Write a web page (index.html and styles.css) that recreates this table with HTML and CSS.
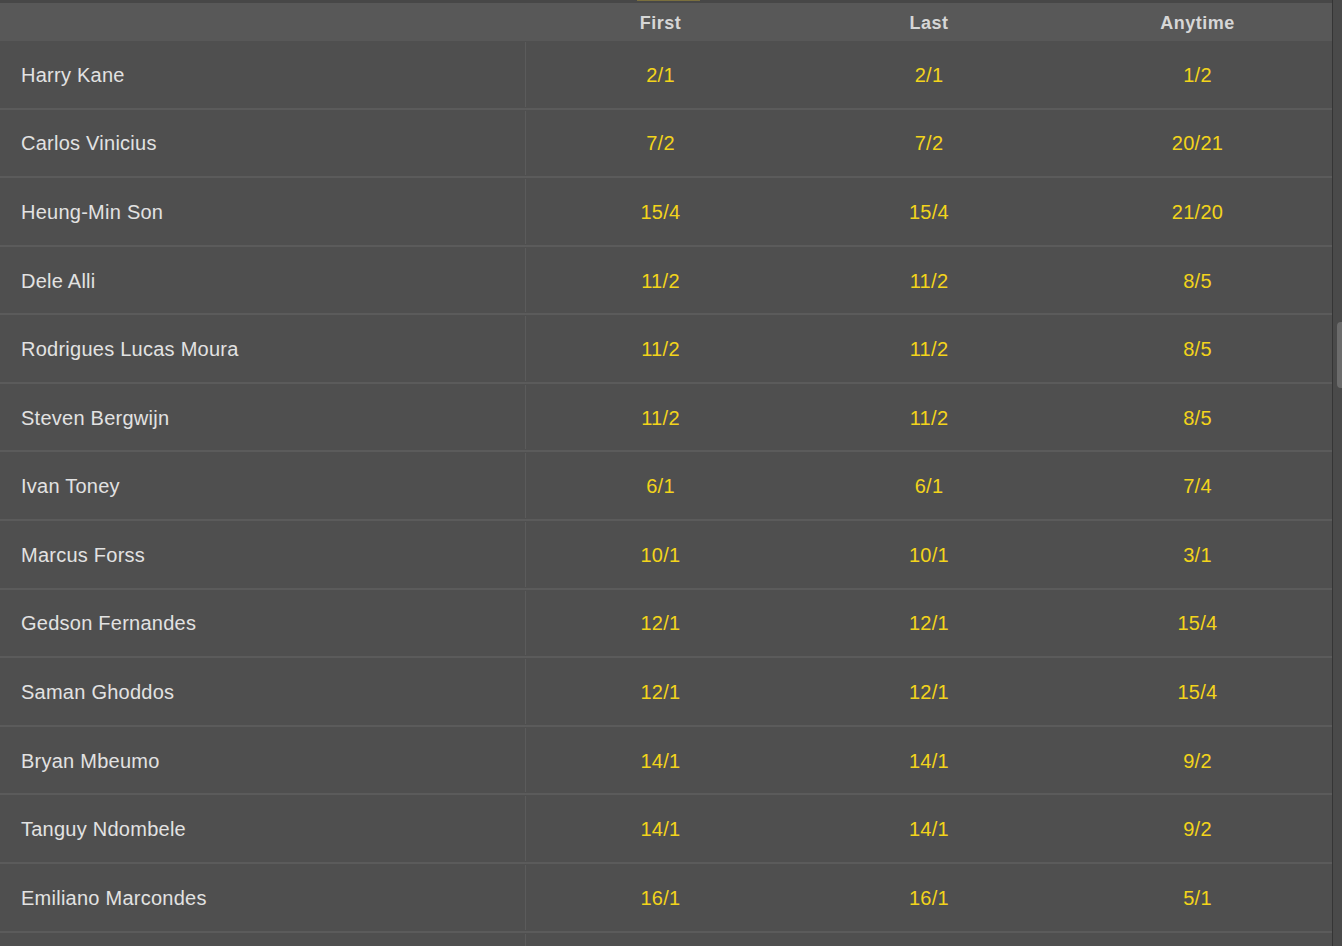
FILE: index.html
```html
<!DOCTYPE html>
<html>
<head>
<meta charset="utf-8">
<link rel="stylesheet" href="styles.css">
</head>
<body>
<div class="page">
  <div class="table">
    <div class="topstrip"><span class="accent"></span></div>
    <div class="head">
      <div class="hcell"></div>
      <div class="hcell">First</div>
      <div class="hcell">Last</div>
      <div class="hcell">Anytime</div>
    </div>
    <div class="row"><div class="name">Harry Kane</div><div class="odd">2/1</div><div class="odd">2/1</div><div class="odd">1/2</div></div>
    <div class="row"><div class="name">Carlos Vinicius</div><div class="odd">7/2</div><div class="odd">7/2</div><div class="odd">20/21</div></div>
    <div class="row"><div class="name">Heung-Min Son</div><div class="odd">15/4</div><div class="odd">15/4</div><div class="odd">21/20</div></div>
    <div class="row"><div class="name">Dele Alli</div><div class="odd">11/2</div><div class="odd">11/2</div><div class="odd">8/5</div></div>
    <div class="row"><div class="name">Rodrigues Lucas Moura</div><div class="odd">11/2</div><div class="odd">11/2</div><div class="odd">8/5</div></div>
    <div class="row"><div class="name">Steven Bergwijn</div><div class="odd">11/2</div><div class="odd">11/2</div><div class="odd">8/5</div></div>
    <div class="row"><div class="name">Ivan Toney</div><div class="odd">6/1</div><div class="odd">6/1</div><div class="odd">7/4</div></div>
    <div class="row"><div class="name">Marcus Forss</div><div class="odd">10/1</div><div class="odd">10/1</div><div class="odd">3/1</div></div>
    <div class="row"><div class="name">Gedson Fernandes</div><div class="odd">12/1</div><div class="odd">12/1</div><div class="odd">15/4</div></div>
    <div class="row"><div class="name">Saman Ghoddos</div><div class="odd">12/1</div><div class="odd">12/1</div><div class="odd">15/4</div></div>
    <div class="row"><div class="name">Bryan Mbeumo</div><div class="odd">14/1</div><div class="odd">14/1</div><div class="odd">9/2</div></div>
    <div class="row"><div class="name">Tanguy Ndombele</div><div class="odd">14/1</div><div class="odd">14/1</div><div class="odd">9/2</div></div>
    <div class="row"><div class="name">Emiliano Marcondes</div><div class="odd">16/1</div><div class="odd">16/1</div><div class="odd">5/1</div></div>
    <div class="row"><div class="name"></div><div class="odd"></div><div class="odd"></div><div class="odd"></div></div>
  </div>
  <div class="scrollbar"><div class="thumb"></div></div>
</div>
</body>
</html>
```

FILE: styles.css
```css
html, body {
  margin: 0;
  padding: 0;
  background: #4f4f4f;
  overflow: hidden;
}
body {
  font-family: "Liberation Sans", Arial, sans-serif;
  width: 1342px;
  height: 946px;
}
.page {
  display: flex;
  height: 946px;
  overflow: hidden;
}
.table {
  width: 1332px;
  flex: none;
  background: #4f4f4f;
}
.topstrip {
  height: 3px;
  background: #474747;
  position: relative;
}
.accent {
  position: absolute;
  left: 637px;
  top: 0;
  width: 63px;
  height: 1px;
  background: #7a6f3e;
}
.head {
  display: grid;
  grid-template-columns: 526px 269px 268px 269px;
  height: 38px;
  box-sizing: border-box;
  padding-top: 2px;
  background: #585858;
  align-items: center;
}
.hcell {
  text-align: center;
  color: #d6d6d6;
  font-weight: bold;
  font-size: 18px;
  letter-spacing: 0.5px;
}
.row {
  display: grid;
  grid-template-columns: 526px 269px 268px 269px;
  height: 68.58px;
  box-sizing: border-box;
  border-bottom: 2px solid #5b5b5b;
  align-items: center;
  padding-top: 2px;
}
.name {
  height: 100%;
  display: flex;
  align-items: center;
  padding-left: 21px;
  color: #e2e2e2;
  font-size: 20px;
  letter-spacing: 0.25px;
  border-right: 1px solid #5b5b5b;
  box-sizing: border-box;
  margin-top: -2px;
  padding-top: 2px;
}
.odd {
  text-align: center;
  color: #f3d41b;
  font-size: 20px;
  letter-spacing: 0.3px;
}
.scrollbar {
  width: 10px;
  flex: none;
  background: #4a4a4a;
  border-left: 1px solid #353535;
  box-sizing: border-box;
  padding-top: 322px;
  display: flex;
  justify-content: flex-end;
}
.thumb {
  width: 5px;
  height: 66px;
  background: #6b6b6b;
  border-radius: 4px 0 0 4px;
}
```
